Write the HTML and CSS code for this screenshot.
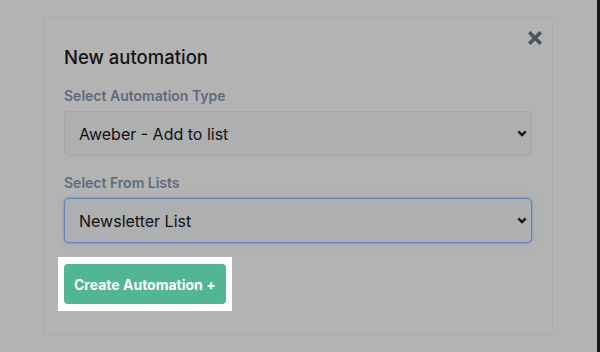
FILE: index.html
```html
<!DOCTYPE html>
<html>
<head>
<meta charset="utf-8">
<link rel="stylesheet" href="styles.css">
</head>
<body>
<div class="page">
  <main class="stage">
    <section class="card">
      <button class="close" aria-label="Close">
        <svg width="14" height="14" viewBox="0 0 14 14"><path d="M2.5 2.5 L11.5 11.5 M11.5 2.5 L2.5 11.5" stroke="#4b5361" stroke-width="3.6" stroke-linecap="square"/></svg>
      </button>
      <h2 class="title">New automation</h2>
      <label class="label label-first">Select Automation Type</label>
      <div class="select">
        <span>Aweber - Add to list</span>
        <svg class="chev" width="10" height="7" viewBox="0 0 10 7"><path d="M1.3 1.3 L5 5 L8.7 1.3" fill="none" stroke="#111" stroke-width="2.4"/></svg>
      </div>
      <label class="label">Select From Lists</label>
      <div class="select select-focus">
        <span>Newsletter List</span>
        <svg class="chev" width="10" height="7" viewBox="0 0 10 7"><path d="M1.3 1.3 L5 5 L8.7 1.3" fill="none" stroke="#111" stroke-width="2.4"/></svg>
      </div>
      <div class="spot">
        <button class="btn">Create Automation +</button>
      </div>
    </section>
  </main>
  <div class="edge"></div>
</div>
</body>
</html>
```
FILE: styles.css
```css
html, body {
  margin: 0;
  padding: 0;
  height: 100%;
}
body {
  background: #b3b3b3;
  font-family: Inter, "Noto Sans", sans-serif;
  overflow: hidden;
}
.page {
  display: flex;
  height: 352px;
}
.stage {
  flex: 1;
  padding: 17px 0 0 43px;
}
.edge {
  width: 3px;
  background: #161616;
}
.card {
  position: relative;
  box-sizing: border-box;
  width: 510px;
  height: 318px;
  border: 1px solid #a9aaac;
  border-radius: 5px;
  padding: 25px 20px 0 20px;
  display: flex;
  flex-direction: column;
}
.close {
  position: absolute;
  top: 13px;
  right: 10px;
  width: 14px;
  height: 14px;
  padding: 0;
  border: 0;
  background: none;
  display: flex;
}
.title {
  margin: 0;
  font-size: 18.5px;
  line-height: 28px;
  font-weight: 500;
  color: #141414;
}
.label {
  display: block;
  margin-top: 17px;
  margin-bottom: 5px;
  font-size: 14px;
  line-height: 20px;
  font-weight: 600;
  color: #5d6a7e;
}
.label-first {
  margin-top: 15px;
}
.select {
  box-sizing: border-box;
  height: 45px;
  border: 1px solid #a6a7a9;
  border-radius: 5px;
  background: #aeafb1;
  display: flex;
  align-items: center;
  justify-content: space-between;
  padding: 0 4px 0 14px;
  font-size: 16px;
  color: #111;
}
.select-focus {
  border-color: #5f84b8;
  box-shadow: 0 0 0 1px rgba(95,132,184,0.25), 0 0 6px rgba(95,132,184,0.3);
}
.spot {
  align-self: flex-start;
  margin: 14px 0 0 -6px;
  padding: 7px 6px;
  background: #ffffff;
}
.btn {
  display: block;
  height: 40px;
  padding: 0 10px;
  border: 0;
  border-radius: 4px;
  background: #52b594;
  color: #fff;
  font-family: Inter, "Noto Sans", sans-serif;
  font-size: 14px;
  font-weight: 700;
}
```
